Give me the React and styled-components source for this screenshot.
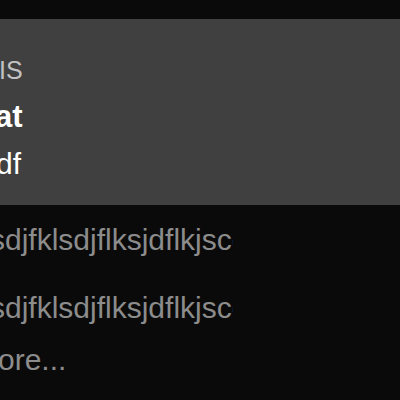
import React from 'react'
import styled, { createGlobalStyle } from 'styled-components'

const Global = createGlobalStyle`
  html, body {
    margin: 0;
    padding: 0;
    background: #0a0a0a;
    overflow: hidden;
  }
  body {
    font-family: 'Liberation Sans', Arial, sans-serif;
  }
`

const Page = styled.div`
  width: 400px;
  height: 400px;
  padding-top: 19px;
  box-sizing: border-box;
  overflow: hidden;
`

const Header = styled.section`
  background: #404040;
  height: 186px;
  box-sizing: border-box;
  padding-top: 32px;
  display: flex;
  flex-direction: column;
`

const Line = styled.div`
  font-size: ${(p) => p.size}px;
  font-weight: ${(p) => (p.bold ? 700 : 400)};
  color: ${(p) => p.color};
  line-height: ${(p) => p.lh}px;
  margin-left: ${(p) => p.shift || 0}px;
  white-space: nowrap;
`

const Body = styled.section`
  display: flex;
  flex-direction: column;
  padding-top: 1px;
`

const Snippet = styled.div`
  width: ${(p) => 233 - (p.shift || 0)}px;
  margin-left: ${(p) => p.shift || 0}px;
  overflow: hidden;
  white-space: nowrap;
  font-size: 30px;
  line-height: 68px;
  color: #8c8c8c;
`

const More = styled.div`
  margin-left: -2px;
  font-size: 30px;
  line-height: 36px;
  color: #8c8c8c;
`

export default function App() {
  return (
    <Page>
      <Global />
      <Header>
        <Line size={25} color="#c2c2c2" lh={38} shift={-1}>IS</Line>
        <Line size={31} color="#ffffff" lh={56} shift={-5} bold>at</Line>
        <Line size={30} color="#ffffff" lh={38} shift={-4}>df</Line>
      </Header>
      <Body>
        <Snippet shift={-10}>sdjfklsdjflksjdflkjscdfklsdjf</Snippet>
        <Snippet shift={-10}>sdjfklsdjflksjdflkjscdfklsdjf</Snippet>
        <More>ore...</More>
      </Body>
    </Page>
  )
}
